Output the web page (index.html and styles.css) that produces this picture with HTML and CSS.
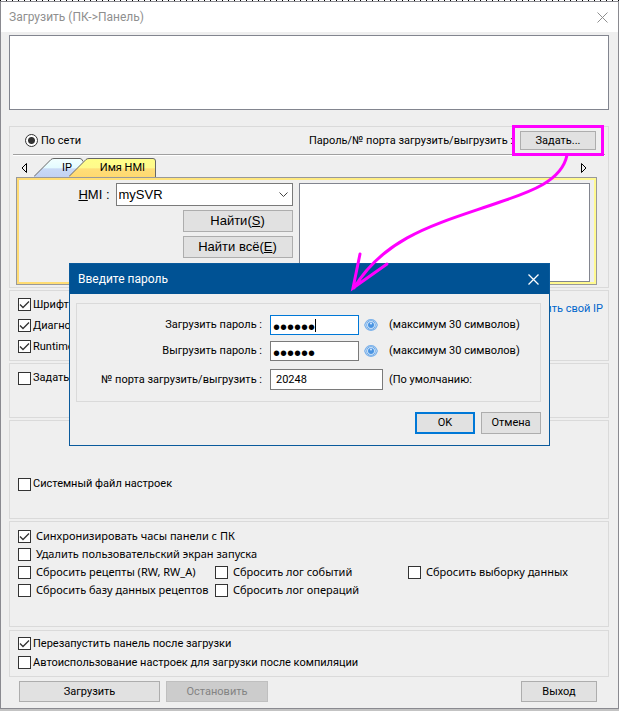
FILE: index.html
```html
<!DOCTYPE html>
<html lang="ru">
<head>
<meta charset="utf-8">
<title>Загрузить (ПК-&gt;Панель)</title>
<link rel="stylesheet" href="styles.css">
</head>
<body>
<main class="window">
  <header class="titlebar">
    <h1>Загрузить (ПК-&gt;Панель)</h1>
    <button class="close" aria-label="Закрыть"><svg width="11" height="11" viewBox="0 0 11 11"><path d="M.5 .5l10 10M10.5 .5l-10 10" stroke="currentColor" fill="none"/></svg></button>
  </header>
  <div class="content">
    <textarea class="log" aria-label="Журнал" readonly></textarea>

    <section class="group network">
      <div class="network-head">
        <label class="radio"><input type="radio" name="link" checked>По сети</label>
        <span class="port-label">Пароль/№ порта загрузить/выгрузить :</span>
        <span class="marked"><button class="btn set">Задать...</button></span>
      </div>
      <div class="tabs">
        <svg class="arrow" width="6" height="10" viewBox="0 0 6 10"><path d="M5.5 .5v9L1 5z" fill="none" stroke="#000"/></svg>
        <div class="tab-strip" role="tablist">
          <button class="tab ip" role="tab"><svg width="52" height="19" viewBox="0 0 52 19"><defs><linearGradient id="blue" x2="0" y2="1"><stop offset="0" stop-color="#f2ffff"/><stop offset=".5" stop-color="#e4fbff"/><stop offset=".56" stop-color="#c8d9f6"/><stop offset="1" stop-color="#c3d2f2"/></linearGradient></defs><path d="M0 18.5L17 1.5Q18 .5 20 .5H46Q48 .5 49 3.500L35 19H0z" fill="url(#blue)"/><path d="M0 18.500L17 1.500Q18 .5 20 .5H46Q48 .5 49 3.500" fill="none" stroke="#666"/></svg><span>IP</span></button>
          <button class="tab hmi" role="tab" aria-selected="true"><svg width="87" height="19" viewBox="0 0 87 19"><defs><linearGradient id="gold" x2="0" y2="1"><stop offset="0" stop-color="#ffff88"/><stop offset=".5" stop-color="#fffa8c"/><stop offset=".56" stop-color="#ffde78"/><stop offset="1" stop-color="#ffd970"/></linearGradient></defs><path d="M0 18.500L17 1.500Q18 .5 20 .5H84Q86.500 .5 86.500 3V19H0z" fill="url(#gold)"/><path d="M0 18.500L17 1.500Q18 .5 20 .5H84Q86.500 .5 86.500 3V19" fill="none" stroke="#666"/></svg><span>Имя HMI</span></button>
        </div>
        <svg class="arrow next" width="6" height="10" viewBox="0 0 6 10"><path d="M.5 .5v9L5 5z" fill="none" stroke="#000"/></svg>
      </div>
      <div class="panel">
        <div class="panel-body">
          <div class="search">
            <div class="hmi-row">
              <label for="hmi"><u>H</u>MI :</label>
              <select id="hmi"><option>mySVR</option></select>
            </div>
            <button class="btn find">Найти(<u>S</u>)</button>
            <button class="btn find">Найти всё(<u>E</u>)</button>
          </div>
          <div class="results"></div>
        </div>
      </div>
    </section>

    <section class="group files">
      <div class="stack">
        <label><input type="checkbox" checked>Шрифт</label>
        <label><input type="checkbox" checked>Диагно</label>
        <label><input type="checkbox" checked>Runtime</label>
      </div>
      <a href="#ip">ить свой IP</a>
    </section>

    <section class="group assign">
      <label><input type="checkbox">Задать</label>
    </section>

    <section class="group system">
      <label><input type="checkbox">Системный файл настроек</label>
    </section>

    <section class="group reset">
      <label class="wide"><input type="checkbox" checked>Синхронизировать часы панели с ПК</label>
      <label class="wide"><input type="checkbox">Удалить пользовательский экран запуска</label>
      <label><input type="checkbox">Сбросить рецепты (RW, RW_A)</label>
      <label><input type="checkbox">Сбросить лог событий</label>
      <label><input type="checkbox">Сбросить выборку данных</label>
      <label><input type="checkbox">Сбросить базу данных рецептов</label>
      <label><input type="checkbox">Сбросить лог операций</label>
    </section>

    <section class="group after">
      <label><input type="checkbox" checked>Перезапустить панель после загрузки</label>
      <label><input type="checkbox">Автоиспользование настроек для загрузки после компиляции</label>
    </section>

    <footer class="actions">
      <button class="btn download">Загрузить</button>
      <button class="btn stop" disabled>Остановить</button>
      <button class="btn exit">Выход</button>
    </footer>
  </div>
</main>

<div class="dialog" role="dialog" aria-labelledby="dlg-title">
  <header class="dialog-title">
    <h2 id="dlg-title">Введите пароль</h2>
    <button class="close" aria-label="Закрыть"><svg width="11" height="11" viewBox="0 0 11 11"><path d="M.5 .5l10 10M10.5 .5l-10 10" stroke="currentColor" stroke-width="1.3" fill="none"/></svg></button>
  </header>
  <div class="dialog-body">
    <div class="group fields">
      <div class="field">
        <label for="p1">Загрузить пароль :</label>
        <div class="control"><span class="active"><input id="p1" type="password" value="111111"></span>
          <svg class="eye" width="14" height="14" viewBox="0 0 14 14"><path d="M.7 7Q2.500 1.700 7 1.700T13.300 7Q11.500 12.300 7 12.300T.7 7z" fill="#e6f1fc" stroke="#7db2ea" stroke-width="1.200"/><circle cx="7" cy="7" r="4.300" fill="#e6f1fc" stroke="#6aa7e6"/><circle cx="7" cy="7" r="3" fill="#4a94e2"/><circle cx="7" cy="5.600" r="1" fill="#d8ebff"/></svg></div>
        <span>(максимум 30 символов)</span>
      </div>
      <div class="field">
        <label for="p2">Выгрузить пароль :</label>
        <div class="control"><input id="p2" type="password" value="111111">
          <svg class="eye" width="14" height="14" viewBox="0 0 14 14"><path d="M.7 7Q2.500 1.700 7 1.700T13.300 7Q11.500 12.300 7 12.300T.7 7z" fill="#e6f1fc" stroke="#7db2ea" stroke-width="1.200"/><circle cx="7" cy="7" r="4.300" fill="#e6f1fc" stroke="#6aa7e6"/><circle cx="7" cy="7" r="3" fill="#4a94e2"/><circle cx="7" cy="5.600" r="1" fill="#d8ebff"/></svg></div>
        <span>(максимум 30 символов)</span>
      </div>
      <div class="field">
        <label for="port">№ порта загрузить/выгрузить :</label>
        <div class="control"><input id="port" class="port" type="text" value="20248"></div>
        <span>(По умолчанию:</span>
      </div>
    </div>
    <div class="dialog-actions">
      <button class="btn ok">OK</button>
      <button class="btn">Отмена</button>
    </div>
  </div>
</div>

<svg class="pointer" width="230" height="140" viewBox="0 0 230 140"><path d="M217 0C212 26 180 37 150 47C90 68 36 80 4 133M10 99L3 133L37 109" fill="none" stroke="#f0f" stroke-width="3" stroke-linecap="round"/></svg>
</body>
</html>
```
FILE: styles.css
```css
* { box-sizing: border-box; }

body {
  margin: 0;
  padding-top: 1px;
  position: relative;
  min-height: 100vh;
  background: #c3c3c3;
  color: #000;
  font: 11px/14px Roboto, sans-serif;
}

body::before {
  content: "";
  position: absolute;
  top: 0;
  left: 0;
  right: 0;
  height: 1px;
  background: repeating-linear-gradient(90deg, #000 0 1px, #fff 1px 6px);
}

button, input, select { font: inherit; color: inherit; margin: 0; }

.window {
  border: 1px solid #8a8a90;
  background: #efefef;
}

.titlebar {
  display: flex;
  align-items: center;
  justify-content: space-between;
  height: 30px;
  padding: 0 10px 0 8px;
  background: #fff;
  color: #8f8f8f;
}

h1, h2 { margin: 0; font-size: 12px; font-weight: 400; line-height: 16px; }

.close { display: flex; padding: 0; border: 0; background: none; color: inherit; }

.content { padding: 3px 9px 6px 8px; }

.log {
  display: block;
  width: 100%;
  height: 75px;
  margin-bottom: 16px;
  border: 1px solid #82858f;
  background: #fff;
  resize: none;
}

.group { border: 1px solid #dadada; margin-bottom: 2px; }

.btn {
  height: 22px;
  padding: 0;
  border: 1px solid #adadad;
  background: #e1e1e1;
}

.network { padding: 0 3px 2px; }

.network-head {
  display: flex;
  align-items: center;
  height: 28px;
  padding: 0 9px 0 12px;
  border-bottom: 1px solid #a0a0a0;
  box-shadow: 0 1px #fff;
}

label { display: flex; align-items: center; gap: 2px; }

.radio { gap: 3px; flex: 1; }

input[type="radio"] {
  appearance: none;
  width: 13px;
  height: 13px;
  border: 1px solid #333;
  border-radius: 50%;
  background: radial-gradient(circle, #333 0 3px, #fff 4px);
}

input[type="checkbox"] {
  appearance: none;
  flex: none;
  width: 13px;
  height: 13px;
  border: 1px solid #333;
  background: #fff;
}

input[type="checkbox"]:checked {
  background: #fff url("data:image/svg+xml,%3Csvg xmlns='http://www.w3.org/2000/svg' viewBox='0 0 11 11'%3E%3Cpath d='M1 5.500L4 8.500L10 2.500' fill='none' stroke='%23333' stroke-width='1.300'/%3E%3C/svg%3E");
}

.port-label { margin-right: 7px; white-space: nowrap; }

.marked { position: relative; display: flex; }

.marked::after {
  content: "";
  position: absolute;
  inset: -6px -8px;
  border: 3px solid #f0f;
}

.set { width: 76px; height: 19px; }

.tabs { display: flex; align-items: center; height: 22px; padding: 3px 18px 0 8px; }

.tab-strip { display: flex; flex: 1; height: 19px; margin-left: 7px; }

.tab {
  position: relative;
  height: 19px;
  padding: 0;
  border: 0;
  background: none;
}

.tab svg { display: block; }

.tab span { position: absolute; top: 3px; right: 11px; white-space: nowrap; }

.tab.ip { width: 35px; }

.tab.ip span { right: -3px; }

.panel {
  margin: 0 8px 0 3px;
  padding: 2px;
  border: 1px solid #999;
  background: linear-gradient(90deg, #ffdb72, #fffa90);
}

.panel-body {
  display: flex;
  gap: 6px;
  padding: 3px 4px 0;
  background: #efefef;
}

.search {
  display: flex;
  flex: 27 1 0;
  flex-direction: column;
  align-items: flex-end;
  gap: 4px;
  font-family: "Liberation Sans", sans-serif;
  font-size: 13px;
}

.search label { gap: 0; white-space: pre; }

.hmi-row { display: flex; align-items: center; gap: 6px; }

select {
  appearance: none;
  width: 177px;
  height: 23px;
  padding: 0 2px;
  border: 1px solid #7a7a7a;
  border-radius: 0;
  background: #fff url("data:image/svg+xml,%3Csvg xmlns='http://www.w3.org/2000/svg' width='9' height='6' viewBox='0 0 9 6'%3E%3Cpath d='M.5 .5L4.500 4.500L8.500 .5' fill='none' stroke='%23444'/%3E%3C/svg%3E") no-repeat right 4px center;
}

.find { width: 110px; }

.results {
  flex: 29 1 0;
  height: 99px;
  border: 1px solid #82858f;
  background: #fff;
}

.files {
  display: flex;
  justify-content: space-between;
  min-height: 71px;
  padding: 3px 5px 3px 8px;
}

.stack label { height: 21px; }

.files a { margin-top: 8px; color: #0066cc; text-decoration: none; }

.assign { min-height: 55px; padding: 7px 8px; }

.system { min-height: 99px; padding: 56px 8px 0; }

.reset {
  display: grid;
  grid-template-columns: 197px 193px 1fr;
  grid-auto-rows: 18px;
  min-height: 106px;
  margin-bottom: 3px;
  padding: 5px 8px;
  font-family: "Noto Sans", sans-serif;
}

.reset label { gap: 5px; white-space: nowrap; }

.wide { grid-column: 1 / -1; }

.after { min-height: 47px; padding: 3px 8px; margin-bottom: 4px; }

.after label { height: 19px; }

.actions { display: flex; gap: 6px; padding: 0 12px 0 10px; }

.actions .btn { height: 21px; }

.download { width: 141px; }

.stop { width: 102px; background: #ccc; border-color: #bfbfbf; color: #838383; }

.exit { width: 76px; margin-left: auto; }

.dialog {
  position: absolute;
  top: 263px;
  left: 69px;
  right: 69px;
  border: 1px solid #0a5a9c;
  background: #efefef;
}

.dialog-title {
  display: flex;
  align-items: center;
  justify-content: space-between;
  height: 30px;
  padding: 0 10px 0 8px;
  background: #005294;
  color: #fff;
}

.dialog-body { padding: 9px 8px 11px 6px; }

.fields { padding: 11px 0; margin-bottom: 10px; }

.field { display: flex; align-items: center; gap: 6px; margin-bottom: 6px; white-space: nowrap; }

.field:last-child { margin: 8px 0 0; }

.field label { width: 187px; padding-right: 2px; justify-content: flex-end; }

.control { display: flex; align-items: center; gap: 5px; width: 113px; }

.control input {
  display: block;
  width: 89px;
  height: 20px;
  padding: 0 3px;
  border: 1px solid #7a7a7a;
  background: #fff;
}

.control input[type="password"] { padding: 4px 2px 0; font-family: "Liberation Sans", sans-serif; font-size: 20px; }

.control .port { width: 113px; height: 21px; padding: 0 5px; }

.active { position: relative; }

.control .active input { border-color: #0078d7; }

.active::after {
  content: "";
  position: absolute;
  top: 4px;
  left: 45px;
  width: 1px;
  height: 13px;
  background: #000;
}

.dialog-actions { display: flex; justify-content: flex-end; gap: 6px; }

.dialog-actions .btn { width: 60px; }

.dialog-actions .ok { border: 2px solid #0078d7; }

.pointer { position: absolute; top: 155px; left: 350px; pointer-events: none; }
```
